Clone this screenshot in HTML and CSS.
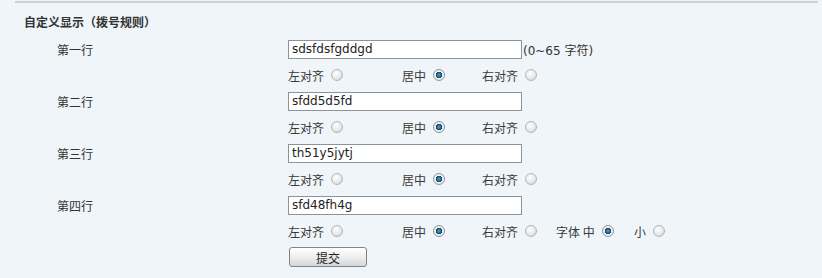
FILE: index.html
```html
<!DOCTYPE html>
<html lang="zh-CN">
<head>
  <meta charset="UTF-8">
  <title>自定义显示</title>
  <link rel="stylesheet" href="styles.css">
</head>
<body>
  <div class="top-line"></div>

  <form class="display-form">
    <div class="section-title">自定义显示（拨号规则）</div>

    <!-- 第一行 -->
    <div class="row">
      <label class="row-label">第一行</label>
      <div class="row-field">
        <input type="text" class="text-input" value="sdsfdsfgddgd"><span class="hint">(0~65 字符)</span>
      </div>
    </div>
    <div class="row">
      <span class="row-label"></span>
      <div class="row-field">
        <span class="opt opt-left">左对齐<input type="radio" name="align1"></span>
        <span class="opt opt-center">居中<input type="radio" name="align1" checked></span>
        <span class="opt opt-right">右对齐<input type="radio" name="align1"></span>
      </div>
    </div>

    <!-- 第二行 -->
    <div class="row">
      <label class="row-label">第二行</label>
      <div class="row-field">
        <input type="text" class="text-input" value="sfdd5d5fd">
      </div>
    </div>
    <div class="row">
      <span class="row-label"></span>
      <div class="row-field">
        <span class="opt opt-left">左对齐<input type="radio" name="align2"></span>
        <span class="opt opt-center">居中<input type="radio" name="align2" checked></span>
        <span class="opt opt-right">右对齐<input type="radio" name="align2"></span>
      </div>
    </div>

    <!-- 第三行 -->
    <div class="row">
      <label class="row-label">第三行</label>
      <div class="row-field">
        <input type="text" class="text-input" value="th51y5jytj">
      </div>
    </div>
    <div class="row">
      <span class="row-label"></span>
      <div class="row-field">
        <span class="opt opt-left">左对齐<input type="radio" name="align3"></span>
        <span class="opt opt-center">居中<input type="radio" name="align3" checked></span>
        <span class="opt opt-right">右对齐<input type="radio" name="align3"></span>
      </div>
    </div>

    <!-- 第四行 -->
    <div class="row">
      <label class="row-label">第四行</label>
      <div class="row-field">
        <input type="text" class="text-input" value="sfd48fh4g">
      </div>
    </div>
    <div class="row">
      <span class="row-label"></span>
      <div class="row-field">
        <span class="opt opt-left">左对齐<input type="radio" name="align4"></span>
        <span class="opt opt-center">居中<input type="radio" name="align4" checked></span>
        <span class="opt opt-right">右对齐<input type="radio" name="align4"></span>
        <span class="opt opt-size">字体 中<input type="radio" name="size" checked></span>
        <span class="opt">小<input type="radio" name="size"></span>
      </div>
    </div>

    <div class="row">
      <span class="row-label"></span>
      <div class="row-field">
        <button type="button" class="submit-btn">提交</button>
      </div>
    </div>
  </form>
</body>
</html>
```

FILE: styles.css
```css
body {
  margin: 0;
  padding: 0;
  background-color: #eff5f8;
  font-family: "DejaVu Sans", "Noto Sans CJK SC", sans-serif;
  font-size: 12px;
  color: #333333;
}

.top-line {
  height: 2px;
  margin: 1px 4px 0 15px;
  background-color: #cdd1d4;
}

.display-form {
  padding-top: 9px;
}

.section-title {
  height: 24px;
  line-height: 20px;
  padding-left: 24px;
  font-family: "Noto Sans CJK SC", sans-serif;
  font-weight: bold;
  color: #333333;
}

.row {
  display: flex;
  align-items: center;
  height: 26px;
}

.row-label {
  width: 231px;
  padding-left: 57px;
  font-family: "Noto Sans CJK SC", sans-serif;
}

.row-field {
  display: flex;
  align-items: center;
}

.text-input {
  box-sizing: border-box;
  width: 234px;
  height: 19px;
  margin: 0;
  padding: 0 3px;
  border: 1px solid #8a949c;
  background-color: #ffffff;
  font-family: "DejaVu Sans", sans-serif;
  font-size: 12px;
  color: #222222;
}

.hint {
  margin-left: 1px;
}

.opt {
  display: flex;
  align-items: center;
  font-family: "Noto Sans CJK SC", sans-serif;
  color: #3a3a3a;
}

.opt-left {
  width: 114px;
}

.opt-center {
  width: 80px;
}

.opt-right {
  width: 74px;
}

.opt-size {
  width: 78px;
}

/* radio buttons drawn like the old XP style ones */
.opt input[type="radio"] {
  -webkit-appearance: none;
  appearance: none;
  box-sizing: border-box;
  width: 12px;
  height: 12px;
  margin: 0 0 0 7px;
  border: 1px solid #b4b8bb;
  border-radius: 50%;
  background: radial-gradient(circle at 40% 35%, #ffffff 0%, #e6e8ea 55%, #c9cdd0 100%);
}

.opt input[type="radio"]:checked {
  border-color: #8e98a0;
  background: radial-gradient(circle at 50% 50%, #5fa0c4 0%, #1d5f86 32%, #16425e 42%, #f2f4f5 50%, #d5d9dc 100%);
}

.submit-btn {
  box-sizing: border-box;
  width: 78px;
  height: 20px;
  margin: 0 0 0 1px;
  padding: 0;
  border: 1px solid #7e8488;
  border-radius: 3px;
  background: linear-gradient(#ffffff, #f1f1f1 45%, #d6d6d6);
  font-family: "Noto Sans CJK SC", sans-serif;
  font-size: 12px;
  color: #222222;
}
```
